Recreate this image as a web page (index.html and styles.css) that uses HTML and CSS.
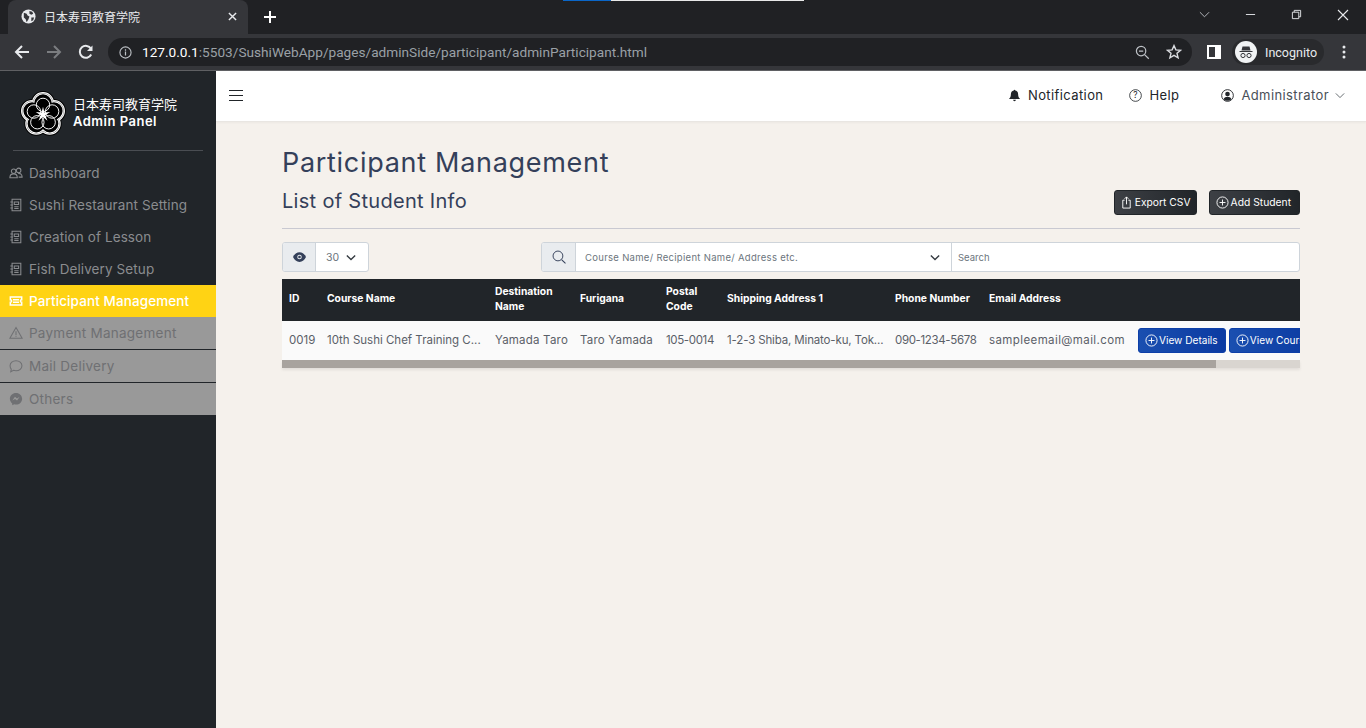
FILE: index.html

```html
<!DOCTYPE html>
<html lang="en">
<head>
    <meta charset="UTF-8">
    <meta name="viewport" content="width=device-width, initial-scale=1.0">
    <title>Participant Management</title>
    <link rel="stylesheet" href="styles.css">
</head>
<body>
    <div class="tabstrip">
        <div class="tab">
            <svg class="tab-globe" viewBox="0 0 16 16"><circle cx="8" cy="8" r="7.5" fill="#e8eaed"/><path d="M3 4l3 1 1 2 2 1-1 3-2 3-1-3-2-2zM9 2l3 1 1 2-2 1-2-1zM11 9l3 0-1 3-2 1z" fill="#35363a"/></svg>
            <span class="tab-title">日本寿司教育学院</span>
            <svg class="tab-close" viewBox="0 0 10 10"><path d="M1 1l8 8M9 1l-8 8" stroke="#e8eaed" stroke-width="1.6"/></svg>
        </div>
        <svg class="new-tab" viewBox="0 0 12 12"><path d="M6 0v12M0 6h12" stroke="#fff" stroke-width="2"/></svg>
        <div class="window-btns">
            <svg viewBox="0 0 12 12" class="win-chevron"><path d="M1 3.500l5 5 5-5" fill="none" stroke="#bdc1c6"/></svg>
            <svg viewBox="0 0 12 12" class="win-min"><path d="M1 6h10" stroke="#e8eaed"/></svg>
            <svg viewBox="0 0 12 12" class="win-max"><path d="M1.500 3.500h7v7h-7zM3.500 3.500v-2h7v7h-2" fill="none" stroke="#e8eaed"/></svg>
            <svg viewBox="0 0 12 12" class="win-close"><path d="M1 1l10 10M11 1l-10 10" stroke="#e8eaed" stroke-width="1.100"/></svg>
        </div>
    </div>

    <div class="capture-line"><span class="capture-blue"></span><span class="capture-white"></span></div>

    <div class="toolbar">
        <svg class="nav-icon" viewBox="0 0 16 16"><path d="M15 8H2M8 2L2 8l6 6" fill="none" stroke="#e8eaed" stroke-width="2"/></svg>
        <svg class="nav-icon nav-forward" viewBox="0 0 16 16"><path d="M1 8h13M8 2l6 6-6 6" fill="none" stroke="#7b7d80" stroke-width="2"/></svg>
        <svg class="nav-icon nav-reload" viewBox="0 0 16 16"><path d="M13.200 10.500A6 6 0 1 1 13 4.800" fill="none" stroke="#e8eaed" stroke-width="2"/><path d="M14.500 1.500v5.500H9z" fill="#e8eaed"/></svg>
        <div class="omnibox">
            <svg class="omni-info" viewBox="0 0 14 14"><circle cx="7" cy="7" r="6" fill="none" stroke="#bdc1c6" stroke-width="1.200"/><path d="M7 6v4.200M7 3.600v1.400" stroke="#bdc1c6" stroke-width="1.300"/></svg>
            <span class="url"><span class="url-host">127.0.0.1</span>:5503/SushiWebApp/pages/adminSide/participant/adminParticipant.html</span>
            <svg class="omni-zoom" viewBox="0 0 16 16"><circle cx="6.500" cy="6.500" r="5" fill="none" stroke="#bdc1c6" stroke-width="1.300"/><path d="M10.200 10.200l4.500 4.500M4.200 6.500h4.600" stroke="#bdc1c6" stroke-width="1.300"/></svg>
            <svg class="omni-star" viewBox="0 0 16 16"><path d="M8 1.600l1.900 4.300 4.600.4-3.500 3 1.100 4.600L8 11.400l-4.100 2.500L5 9.300l-3.500-3 4.600-.4z" fill="none" stroke="#dadce0" stroke-width="1.400"/></svg>
        </div>
        <svg class="side-panel" viewBox="0 0 14 14"><path d="M0 0h14v14H0z" fill="#fff"/><path d="M2 2h6v10H2z" fill="#35363a"/></svg>
        <div class="profile">
            <svg class="profile-avatar" viewBox="0 0 22 22"><circle cx="11" cy="11" r="11" fill="#f1f3f4"/><path d="M7.500 5.500h7l1 4h-9zM4.500 10h13v1h-13z" fill="#35363a"/><circle cx="8" cy="14.500" r="2.100" fill="none" stroke="#35363a"/><circle cx="14" cy="14.500" r="2.100" fill="none" stroke="#35363a"/></svg>
            <span>Incognito</span>
        </div>
        <svg class="menu-dots" viewBox="0 0 4 14"><circle cx="2" cy="2" r="1.500" fill="#e8eaed"/><circle cx="2" cy="7" r="1.500" fill="#e8eaed"/><circle cx="2" cy="12" r="1.500" fill="#e8eaed"/></svg>
    </div>

    <div class="app">
        <aside class="sidebar">
            <div class="brand">
                <svg class="brand-logo" viewBox="0 0 48 48">
                    <defs>
                        <g id="petals">
                            <circle cx="24" cy="12.500" r="9"/>
                            <circle cx="35.400" cy="20.800" r="9"/>
                            <circle cx="31" cy="34.200" r="9"/>
                            <circle cx="17" cy="34.200" r="9"/>
                            <circle cx="12.600" cy="20.800" r="9"/>
                        </g>
                    </defs>
                    <use href="#petals" fill="#000" stroke="#000" stroke-width="7"/>
                    <use href="#petals" fill="#fff" stroke="#fff" stroke-width="5"/>
                    <use href="#petals" fill="#8a8a8a" stroke="#8a8a8a" stroke-width="3"/>
                    <use href="#petals" fill="#fff" stroke="#fff" stroke-width="2"/>
                    <use href="#petals" fill="#000"/>
                    <circle cx="24" cy="24.500" r="11" fill="#000"/>
                    <g fill="none" stroke="#fff" stroke-width="1">
                        <circle cx="24" cy="14.500" r="7"/>
                        <circle cx="33.500" cy="21.400" r="7"/>
                        <circle cx="29.900" cy="32.600" r="7"/>
                        <circle cx="18.100" cy="32.600" r="7"/>
                        <circle cx="14.500" cy="21.400" r="7"/>
                    </g>
                    <path d="M24 16.500L25.500 22.500 31.600 22 26.400 25.300 28.700 31 24 27 19.300 31 21.600 25.300 16.400 22 22.500 22.500z" fill="#fff"/>
                </svg>
                <div class="brand-text">
                    <div class="brand-jp">日本寿司教育学院</div>
                    <div class="brand-en">Admin Panel</div>
                </div>
            </div>
            <div class="brand-rule"></div>
            <nav class="nav">
                <a class="nav-item">
                    <svg class="nav-svg" viewBox="0 0 16 16"><circle cx="5.300" cy="6" r="2.600"/><circle cx="11" cy="5" r="2.600"/><path d="M1 13.500c0-3 2-4.500 4.300-4.500s4.200 1.500 4.200 4.500zM10.500 8.500c2.500-.4 4.500 1.300 4.500 4.200h-4"/></svg>
                    Dashboard
                </a>
                <a class="nav-item">
                    <svg class="nav-svg" viewBox="0 0 16 16"><path d="M3.500 1.500h10v13h-10zM1.500 4.500h3M1.500 8h3M1.500 11.500h3M6 4.500h5v3H6zM6 10h5M6 12h5"/></svg>
                    Sushi Restaurant Setting
                </a>
                <a class="nav-item">
                    <svg class="nav-svg" viewBox="0 0 16 16"><path d="M3.500 1.500h10v13h-10zM1.500 4.500h3M1.500 8h3M1.500 11.500h3M6 4.500h5v3H6zM6 10h5M6 12h5"/></svg>
                    Creation of Lesson
                </a>
                <a class="nav-item">
                    <svg class="nav-svg" viewBox="0 0 16 16"><path d="M3.500 1.500h10v13h-10zM1.500 4.500h3M1.500 8h3M1.500 11.500h3M6 4.500h5v3H6zM6 10h5M6 12h5"/></svg>
                    Fish Delivery Setup
                </a>
                <a class="nav-item nav-active">
                    <svg class="nav-svg" viewBox="0 0 16 16"><path d="M1.500 3.500h13v3a1.500 1.500 0 0 0 0 3v3h-13v-3a1.500 1.500 0 0 0 0-3zM4.500 6.500h7M4.500 9.500h7"/></svg>
                    Participant Management
                </a>
                <a class="nav-item nav-off">
                    <svg class="nav-svg" viewBox="0 0 16 16"><path d="M8 1.800L15 14H1zM8 6v4.200M8 11.200v1.200"/></svg>
                    Payment Management
                </a>
                <a class="nav-item nav-off">
                    <svg class="nav-svg" viewBox="0 0 16 16"><path d="M8 2c3.800 0 6.800 2.500 6.800 5.700S11.800 13.400 8 13.400c-1 0-2-.2-2.800-.5L2 14.500l.6-3C1.700 10.500 1.200 9.200 1.200 7.700 1.200 4.500 4.200 2 8 2z"/></svg>
                    Mail Delivery
                </a>
                <a class="nav-item nav-off">
                    <svg class="nav-svg nav-fill" viewBox="0 0 16 16"><path d="M8 1c3.900 0 7 2.900 7 6.700s-3.100 6.700-7 6.700c-.7 0-1.400-.1-2-.3L3.700 15.200V13C2 11.700 1 9.900 1 7.700 1 3.900 4.100 1 8 1z"/><path class="nav-bolt" d="M3.800 9.800l3-4.300 2.300 1.800 3.100-1.800-3 4.300-2.300-1.800z"/></svg>
                    Others
                </a>
            </nav>
        </aside>

        <div class="main">
            <header class="topbar">
                <svg class="burger" viewBox="0 0 14 13"><path d="M0 1.500h14M0 6.500h14M0 11.500h14" stroke="#212529" stroke-width="1"/></svg>
                <div class="top-links">
                    <a class="top-link link-notify">
                        <svg class="top-icon" viewBox="0 0 14 14"><path d="M7 .8c.5 0 .8.3.8.8 2.100.4 3.100 2 3.100 4 0 3 1.100 3.800 1.800 4.600v.6H1.300v-.6C2 9.400 3.100 8.600 3.100 5.600c0-2 1-3.600 3.100-4 0-.5.3-.8.8-.8zM5.500 11.600h3A1.500 1.500 0 0 1 5.500 11.600z" fill="#212529"/></svg>
                        Notification
                    </a>
                    <a class="top-link link-help">
                        <svg class="top-icon" viewBox="0 0 14 14"><circle cx="7" cy="7" r="6.300" fill="none" stroke="#212529" stroke-width=".9"/><text x="7" y="10.200" class="help-mark">?</text></svg>
                        Help
                    </a>
                    <a class="top-link link-admin">
                        <svg class="top-icon" viewBox="0 0 14 14"><circle cx="7" cy="7" r="6.300" fill="none" stroke="#212529" stroke-width="1"/><circle cx="7" cy="5.400" r="2.500" fill="#212529"/><path d="M2.800 11c.8-1.800 2.300-2.600 4.200-2.600s3.400.8 4.200 2.600A6 6 0 0 1 2.800 11z" fill="#212529"/></svg>
                        Administrator
                        <svg class="admin-caret" viewBox="0 0 12 8"><path d="M1 1.500l5 5 5-5" fill="none" stroke="#495057" stroke-width="1"/></svg>
                    </a>
                </div>
            </header>

            <section class="content">
                <h1 class="page-title">Participant Management</h1>
                <div class="section-head">
                    <h2 class="section-title">List of Student Info</h2>
                    <div class="head-btns">
                        <button class="btn btn-dark btn-export">
                            <svg class="btn-icon" viewBox="0 0 14 14"><path d="M5 4.500H3v8.500h8V4.500H9M7 9V1M5 3l2-2 2 2" fill="none" stroke="#fff" stroke-width="1"/></svg>
                            Export CSV
                        </button>
                        <button class="btn btn-dark btn-add">
                            <svg class="btn-icon" viewBox="0 0 14 14"><circle cx="7" cy="7" r="6" fill="none" stroke="#fff"/><path d="M7 3.800v6.400M3.800 7h6.400" stroke="#fff"/></svg>
                            Add Student
                        </button>
                    </div>
                </div>

                <div class="filters">
                    <div class="per-page">
                        <span class="addon addon-eye">
                            <svg class="eye" viewBox="0 0 16 12"><path d="M8 0c3.500 0 6.300 2.500 8 6-1.700 3.500-4.500 6-8 6S1.700 9.500 0 6c1.700-3.500 4.500-6 8-6z" fill="#34405a"/><circle cx="8" cy="6" r="2.800" fill="#e9ecef"/><circle cx="8" cy="6" r="1.600" fill="#34405a"/></svg>
                        </span>
                        <span class="per-value">30
                            <svg class="select-caret" viewBox="0 0 12 8"><path d="M1 1.500l5 5 5-5" fill="none" stroke="#343a40" stroke-width="1.600"/></svg>
                        </span>
                    </div>
                    <div class="search-group">
                        <span class="addon addon-search">
                            <svg class="magnifier" viewBox="0 0 16 16"><circle cx="6.800" cy="6.800" r="5.600" fill="none" stroke="#34405a" stroke-width="1.100"/><path d="M10.900 10.900l4.500 4.500" stroke="#34405a" stroke-width="1.200"/></svg>
                        </span>
                        <span class="search-select">Course Name/ Recipient Name/ Address etc.
                            <svg class="select-caret" viewBox="0 0 12 8"><path d="M1 1.500l5 5 5-5" fill="none" stroke="#343a40" stroke-width="1.600"/></svg>
                        </span>
                        <span class="search-input">Search</span>
                    </div>
                </div>

                <div class="table-wrap">
                    <table class="students">
                        <thead>
                            <tr>
                                <th class="col-id">ID</th>
                                <th class="col-course">Course Name</th>
                                <th class="col-dest">Destination Name</th>
                                <th class="col-furi">Furigana</th>
                                <th class="col-postal">Postal Code</th>
                                <th class="col-addr">Shipping Address 1</th>
                                <th class="col-phone">Phone Number</th>
                                <th class="col-mail">Email Address</th>
                                <th class="col-actions"></th>
                            </tr>
                        </thead>
                        <tbody>
                            <tr>
                                <td>0019</td>
                                <td>10th Sushi Chef Training C...</td>
                                <td class="cell-name">Yamada Taro</td>
                                <td class="cell-name">Taro Yamada</td>
                                <td class="cell-num">105-0014</td>
                                <td class="cell-addr">1-2-3 Shiba, Minato-ku, Tok...</td>
                                <td class="cell-num">090-1234-5678</td>
                                <td class="cell-mail">sampleemail@mail.com</td>
                                <td class="cell-actions">
                                    <button class="btn btn-blue">
                                        <svg class="btn-icon" viewBox="0 0 14 14"><circle cx="7" cy="7" r="6" fill="none" stroke="#fff"/><path d="M7 3.800v6.400M3.800 7h6.400" stroke="#fff"/></svg>
                                        View Details
                                    </button>
                                    <button class="btn btn-blue">
                                        <svg class="btn-icon" viewBox="0 0 14 14"><circle cx="7" cy="7" r="6" fill="none" stroke="#fff"/><path d="M7 3.800v6.400M3.800 7h6.400" stroke="#fff"/></svg>
                                        View Course
                                    </button>
                                </td>
                            </tr>
                        </tbody>
                    </table>
                </div>
                <div class="scrollbar"><div class="scroll-thumb"></div></div>
            </section>
        </div>
    </div>
</body>
</html>
```

FILE: styles.css

```css
* {
    margin: 0;
    padding: 0;
    box-sizing: border-box;
}
html, body {
    height: 100%;
    overflow: hidden;
}
body {
    display: flex;
    flex-direction: column;
    font-family: "Inter", "Noto Sans CJK JP", sans-serif;
    background: #f5f1ec;
    position: relative;
}
svg {
    display: block;
    flex: none;
}

/* browser chrome */
.tabstrip {
    height: 34px;
    background: #202124;
    display: flex;
    align-items: flex-end;
    padding-left: 8px;
    flex: none;
}
.tab {
    width: 240px;
    height: 34px;
    background: #35363a;
    border-radius: 8px 8px 0 0;
    display: flex;
    align-items: center;
    padding-left: 13px;
    padding-bottom: 1px;
}
.tab-globe {
    width: 15px;
    height: 15px;
}
.tab-title {
    margin-left: 8px;
    font-family: "Noto Sans CJK JP", sans-serif;
    font-size: 12px;
    color: #e8eaed;
    flex: 1;
}
.tab-close {
    width: 9px;
    height: 9px;
    margin-right: 11px;
}
.new-tab {
    width: 12px;
    height: 12px;
    margin: 0 0 11px 16px;
}
.window-btns {
    margin-left: auto;
    height: 34px;
    display: flex;
    align-items: center;
    padding-bottom: 5px;
}
.win-chevron,
.win-min,
.win-max {
    width: 11px;
    height: 11px;
    margin-right: 35px;
}
.win-close {
    width: 12px;
    height: 12px;
    margin-right: 17px;
}
.capture-line {
    position: absolute;
    top: 0;
    left: 563px;
    display: flex;
    height: 1px;
}
.capture-blue {
    width: 48px;
    background: #0a66c8;
}
.capture-white {
    width: 193px;
    background: #e8e8e8;
}
.toolbar {
    height: 37px;
    background: #35363a;
    border-bottom: 1px solid #5f6063;
    display: flex;
    align-items: center;
    flex: none;
}
.nav-icon {
    width: 16px;
    height: 16px;
    margin-left: 14px;
}
.nav-forward,
.nav-reload {
    margin-left: 16px;
}
.omnibox {
    margin-left: 14px;
    width: 1084px;
    height: 28px;
    border-radius: 14px;
    background: #202124;
    display: flex;
    align-items: center;
    padding-left: 11px;
}
.omni-info {
    width: 13px;
    height: 13px;
}
.url {
    margin-left: 10px;
    font-family: "Roboto", sans-serif;
    font-size: 13.65px;
    color: #9aa0a6;
    flex: 1;
    white-space: nowrap;
}
.url-host {
    color: #fff;
}
.omni-zoom {
    width: 15px;
    height: 15px;
    margin-right: 16px;
}
.omni-star {
    width: 16px;
    height: 16px;
    margin-right: 10px;
}
.side-panel {
    width: 14px;
    height: 14px;
    margin-left: 15px;
}
.profile {
    margin-left: 11px;
    width: 92px;
    height: 26px;
    border-radius: 13px;
    background: #292a2d;
    display: flex;
    align-items: center;
    padding-left: 3px;
    gap: 8px;
    font-family: "Roboto", sans-serif;
    font-size: 12.5px;
    color: #e8eaed;
}
.profile-avatar {
    width: 22px;
    height: 22px;
}
.menu-dots {
    width: 4px;
    height: 14px;
    margin-left: 18px;
}

/* app layout */
.app {
    flex: 1;
    display: flex;
    min-height: 0;
}
.sidebar {
    width: 216px;
    flex: none;
    background: #212529;
}
.brand {
    height: 79px;
    padding: 20px 0 0 20px;
    display: flex;
    gap: 7px;
}
.brand-logo {
    width: 46px;
    height: 46px;
}
.brand-text {
    padding-top: 5px;
    color: #fff;
}
.brand-jp {
    font-family: "Noto Sans CJK JP", sans-serif;
    font-size: 13px;
    line-height: 16px;
}
.brand-en {
    font-size: 13px;
    font-weight: 600;
    line-height: 18px;
    letter-spacing: .5px;
}
.brand-rule {
    margin: 0 13px;
    border-top: 1px solid #4a4d52;
}
.nav {
    margin-top: 6px;
}
.nav-item {
    height: 32px;
    display: flex;
    align-items: center;
    gap: 6px;
    padding-left: 9px;
    font-size: 13.5px;
    letter-spacing: .1px;
    color: #8a8c8f;
}
.nav-svg {
    width: 14px;
    height: 14px;
    fill: none;
    stroke: currentColor;
    stroke-width: 1.2;
}
.nav-active {
    background: #ffd314;
    color: #fff;
    font-weight: 500;
}
.nav-active .nav-svg {
    stroke-width: 1.7;
}
.nav-off {
    background: #999;
    color: #6f7073;
    height: 33px;
    border-bottom: 1px solid #212529;
    letter-spacing: .25px;
}
.nav-off:last-child {
    border-bottom: 0;
    height: 32px;
}
.nav-fill {
    fill: currentColor;
    stroke: none;
}
.nav-bolt {
    fill: #999;
}

/* main area */
.main {
    flex: 1;
    min-width: 0;
    display: flex;
    flex-direction: column;
}
.topbar {
    height: 51px;
    background: #fff;
    border-bottom: 1px solid #e9e6e2;
    box-shadow: 0 1px 2px rgba(0, 0, 0, 0.04);
    display: flex;
    align-items: center;
    padding: 0 0 2px 13px;
    flex: none;
}
.burger {
    width: 14px;
    height: 13px;
}
.top-links {
    margin-left: auto;
    display: flex;
    align-items: center;
    color: #212529;
    font-size: 13px;
    letter-spacing: .4px;
}
.top-link {
    display: flex;
    align-items: center;
    gap: 7px;
}
.top-icon {
    width: 13px;
    height: 13px;
}
.help-mark {
    font-size: 9px;
    text-anchor: middle;
    fill: #212529;
}
.link-notify {
    margin-right: 26px;
}
.link-help {
    margin-right: 42px;
}
.link-admin {
    color: #495057;
    margin-right: 21px;
}
.admin-caret {
    width: 10px;
    height: 7px;
    margin-left: -1px;
}
.content {
    padding: 25px 66px 0;
    flex: 1;
}
.page-title {
    font-size: 27px;
    font-weight: 400;
    line-height: 32px;
    letter-spacing: .7px;
    color: #34405a;
}
.section-head {
    height: 44px;
    margin-top: 6px;
    padding-top: 5px;
    display: flex;
    justify-content: space-between;
    border-bottom: 1px solid #c9c9d1;
}
.section-title {
    font-size: 20px;
    font-weight: 400;
    line-height: 22px;
    letter-spacing: .3px;
    color: #34405a;
}
.head-btns {
    display: flex;
    gap: 12px;
}
.btn {
    height: 25px;
    border: 1px solid #212529;
    border-radius: 3px;
    display: inline-flex;
    align-items: center;
    gap: 2px;
    padding: 0 7px 0 6px;
    font-family: inherit;
    font-size: 10.1px;
    color: #fff;
    white-space: nowrap;
}
.btn-dark {
    background: linear-gradient(90deg, #3d4045, #212529);
    font-size: 10.3px;
}
.btn-export {
    padding: 0 5px 1px 5px;
}
.btn-add {
    padding: 0 8px 1px 6px;
}
.btn-blue {
    background: linear-gradient(90deg, #1a4fb0, #0b3aa2);
    border-color: #0d3fa8;
    gap: 1px;
}
.btn-icon {
    width: 13px;
    height: 13px;
}
.filters {
    margin-top: 13px;
    display: flex;
    height: 30px;
}
.per-page {
    width: 87px;
    display: flex;
    border: 1px solid #ced4da;
    border-radius: 3px;
    background: #fff;
    overflow: hidden;
}
.addon {
    background: #e9ecef;
    border-right: 1px solid #ced4da;
    display: flex;
    align-items: center;
    justify-content: center;
    flex: none;
}
.addon-eye {
    width: 33px;
}
.eye {
    width: 13px;
    height: 10px;
}
.per-value {
    flex: 1;
    display: flex;
    align-items: center;
    justify-content: space-between;
    padding: 0 12px 0 10px;
    font-size: 10.5px;
    color: #6c757d;
}
.select-caret {
    width: 10px;
    height: 7px;
}
.search-group {
    margin-left: 172px;
    flex: 1;
    display: flex;
    border: 1px solid #ced4da;
    border-radius: 3px;
    background: #fff;
    overflow: hidden;
}
.addon-search {
    width: 34px;
}
.magnifier {
    width: 14px;
    height: 14px;
}
.search-select {
    width: 376px;
    display: flex;
    align-items: center;
    justify-content: space-between;
    padding: 0 11px 0 9px;
    border-right: 1px solid #ced4da;
    font-size: 9.5px;
    letter-spacing: .3px;
    color: #6c757d;
}
.search-input {
    flex: 1;
    display: flex;
    align-items: center;
    padding-left: 6px;
    font-size: 9.5px;
    color: #6c757d;
}
.table-wrap {
    margin-top: 7px;
    overflow: hidden;
    height: 81px;
}
.students {
    border-collapse: collapse;
    table-layout: fixed;
    width: 1120px;
}
.students th {
    height: 42px;
    background: #212529;
    color: #fff;
    font-size: 10.3px;
    font-weight: 700;
    line-height: 15px;
    text-align: left;
    padding: 0 7px 3px;
}
.students td {
    height: 39px;
    background: #fafafa;
    border-bottom: 1px solid #dee2e6;
    color: #5a6068;
    font-size: 11.5px;
    padding: 0 7px;
    white-space: nowrap;
    overflow: hidden;
}
.students .cell-name {
    letter-spacing: .2px;
}
.students .cell-num {
    letter-spacing: -.35px;
}
.students .cell-addr {
    letter-spacing: -.15px;
}
.students .cell-mail {
    letter-spacing: .4px;
}
.col-id { width: 38px; }
.col-course { width: 168px; }
.col-dest { width: 85px; }
.col-furi { width: 86px; }
.col-postal { width: 61px; }
.col-addr { width: 168px; }
.col-phone { width: 94px; }
.col-mail { width: 149px; }
.col-actions { width: 271px; }
.students td.cell-actions {
    overflow: visible;
    padding-left: 7px;
}
.cell-actions .btn {
    vertical-align: middle;
}
.scrollbar {
    height: 8px;
    background: #d9d5d0;
    box-shadow: 0 2px 3px rgba(0, 0, 0, 0.08);
}
.scroll-thumb {
    width: 934px;
    height: 8px;
    background: #a8a39e;
}
```
